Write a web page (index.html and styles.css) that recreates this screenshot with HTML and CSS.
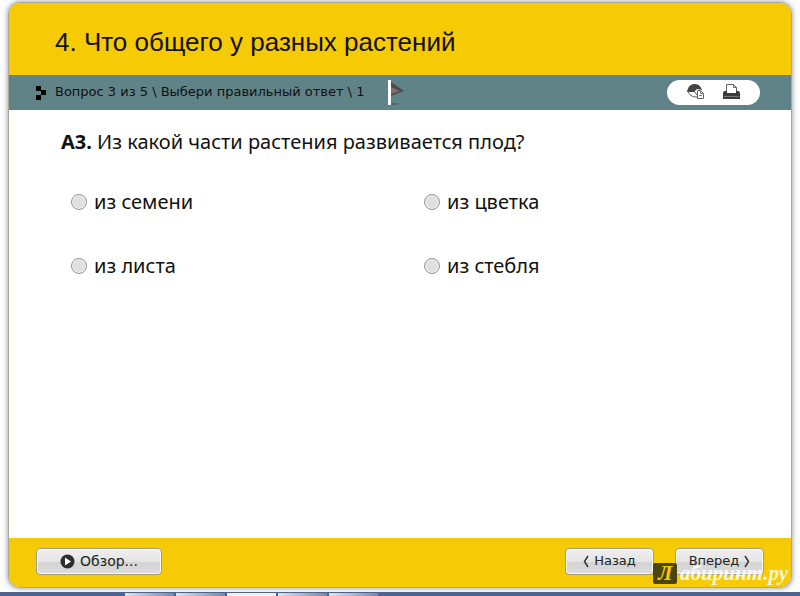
FILE: index.html
```
<!DOCTYPE html>
<html lang="ru">
<head>
  <meta charset="UTF-8">
  <meta name="viewport" content="width=device-width, initial-scale=1.0">
  <title>4. Что общего у разных растений</title>
  <link rel="stylesheet" href="styles.css">
</head>
<body>
  <main class="quiz">
    <header class="quiz-header">
      <h1 class="quiz-title">4. Что общего у разных растений</h1>
    </header>
    <div class="status-bar">
      <svg class="marker" width="10" height="14" viewBox="0 0 10 14" aria-hidden="true">
        <path d="M0 0h5v4h5v5H5v5H0V9h5V5H0z"/>
      </svg>
      <span class="status-text">Вопрос 3 из 5 \ Выбери правильный ответ \ 1</span>
      <svg class="flag" width="18" height="26" viewBox="0 0 18 26" aria-hidden="true">
        <path d="M3 23h8l-2 2H3z" fill="#4a696e"/>
        <path d="M3 2L16 11 3 16z" fill="#4e4a4b"/>
        <path d="M3 7L12 11 3 14z" fill="#777071"/>
        <path d="M0 0h3v25H0z" fill="#fff"/>
      </svg>
      <div class="tools">
        <button type="button" class="tool-btn" aria-label="Оформление">
          <svg width="18" height="18" viewBox="0 0 18 18">
            <path d="M0 9C1 3 4 1 8 1s6 3 7 6l-5-1-3 3z" fill="#444"/>
            <path d="M1 8c1 4 4 6 9 6M7 8l3 4" fill="none" stroke="#555"/>
            <path d="M10.500 7.500h3l3 3v5h-6z" fill="#fff" stroke="#666"/>
            <path d="M13.500 7.500v3h3M12 12.500h3" fill="none" stroke="#777"/>
          </svg>
        </button>
        <button type="button" class="tool-btn" aria-label="Печать">
          <svg width="18" height="18" viewBox="0 0 18 18">
            <path d="M3.500 9V1.500h7l3 3V9" fill="#fff" stroke="#666"/>
            <path d="M10.500 1.500v3h3" fill="none" stroke="#666"/>
            <path d="M1 8h3v2h9V8h3l1 2v6H0v-6z" fill="#3c3c3c"/>
            <path d="M1 13.500h15" stroke="#777"/>
          </svg>
        </button>
      </div>
    </div>

    <form class="question" id="quizForm">
      <p class="question-text" id="questionText"><b>А3.</b> Из какой части растения развивается плод?</p>
      <div class="answers" role="radiogroup" aria-labelledby="questionText">
        <label class="answer"><input type="radio" name="answer" value="1"> из семени</label>
        <label class="answer"><input type="radio" name="answer" value="2"> из цветка</label>
        <label class="answer"><input type="radio" name="answer" value="3"> из листа</label>
        <label class="answer"><input type="radio" name="answer" value="4"> из стебля</label>
      </div>
    </form>

    <footer class="quiz-footer">
      <button type="button" class="btn btn-review">
        <svg class="btn-icon" width="15" height="15" viewBox="0 0 15 15" aria-hidden="true">
          <circle cx="7.500" cy="7.500" r="7" fill="#2e2e2e"/>
          <path d="M5 3.500v8l6-4z" fill="#fff"/>
        </svg>
        Обзор...
      </button>
      <button type="button" class="btn btn-nav">
        <svg class="btn-icon" width="6" height="13" viewBox="0 0 6 13" aria-hidden="true"><path d="M5 1L1.500 6.500 5 12" fill="none" stroke="#333" stroke-width="1.500"/></svg>
        Назад
      </button>
      <button type="button" class="btn btn-nav">
        Вперед
        <svg class="btn-icon" width="6" height="13" viewBox="0 0 6 13" aria-hidden="true"><path d="M1 1l3.500 5.500L1 12" fill="none" stroke="#333" stroke-width="1.500"/></svg>
      </button>
    </footer>
  </main>
  <div class="watermark"><span class="watermark-letter">Л</span>абиринт.ру</div>
  <div class="taskbar">
    <span class="task"></span>
    <span class="task"></span>
    <span class="task task-active"></span>
    <span class="task"></span>
    <span class="task"></span>
  </div>
</body>
</html>
```

FILE: styles.css
```
* { box-sizing: border-box; }
body { margin: 0; min-height: 100vh; display: flex; flex-direction: column; background: #fdfdfe; font-family: "DejaVu Sans", Verdana, sans-serif; color: #111; }

.quiz { flex: 1; display: flex; flex-direction: column; margin: 2px 8px 4px; border: 1px solid #aaa995; border-radius: 12px; overflow: hidden; background: #fff; box-shadow: 0 0 4px 1px #aaadb5; }
.quiz-header { display: flex; align-items: center; height: 72px; padding: 6px 46px 0; background: #f6ca05; }
.quiz-title { margin: 0; font: 26px "Liberation Sans", Arial, sans-serif; color: #111; }

.status-bar { display: flex; align-items: center; height: 35px; padding: 0 31px 0 27px; background: #5f8387; font-size: 13px; }
.marker { margin-right: 9px; }
.status-text { padding-bottom: 2px; line-height: 20px; }
.flag { margin-left: 23px; }
.tools { display: flex; justify-content: center; gap: 18px; width: 93px; height: 25px; margin-left: auto; border-radius: 13px; background: #fff; }
.tool-btn { display: flex; align-items: center; padding: 0 0 2px; border: none; background: none; cursor: pointer; }

.question { flex: 1; padding: 16px 52px; font-family: "Noto Sans", "Open Sans", sans-serif; font-size: 20px; line-height: 32px; }
.question-text { margin: 0 0 28px; }
.answers { display: grid; grid-template-columns: 353px 1fr; row-gap: 32px; padding-left: 10px; }
.answer { display: flex; align-items: center; gap: 7px; }
.answer input { appearance: none; width: 16px; height: 16px; margin: 0; border: 1px solid #929292; border-radius: 50%; background: #e0e0e0; box-shadow: inset 0 0 0 1px #f5f5f5; }
.answer input:checked { background: #333; }

.quiz-footer { display: flex; align-items: center; gap: 21px; height: 49px; padding: 0 27px 2px; background: #f6ca05; }
.btn { display: flex; align-items: center; justify-content: center; gap: 5px; height: 27px; padding: 0 0 2px; border: 1px solid #a39c7c; border-radius: 4px; background: linear-gradient(#f0f0f0, #e4e4e4 50%, #d3d3d3 51%, #dcdcdc); box-shadow: inset 0 0 0 1px #fafafa; font: 14px "DejaVu Sans", Verdana, sans-serif; color: #222; cursor: pointer; }
.btn-icon { margin-top: 2px; }
.btn-review { width: 126px; margin-right: auto; }
.btn-nav { width: 89px; font-size: 13px; }

.watermark { position: absolute; right: 12px; bottom: 12px; display: flex; align-items: center; gap: 3px; font: italic bold 21px/21px "Liberation Serif", "Times New Roman", serif; color: rgba(255, 255, 255, 0.85); pointer-events: none; }
.watermark-letter { width: 24px; text-align: center; border-radius: 2px; background: #4d430c; color: #f6ca05; }

.taskbar { display: flex; gap: 2px; height: 4px; padding-left: 125px; border-top: 1px solid #53627e; background: #4665a5; }
.task { width: 49px; background: linear-gradient(90deg, #dce4f1, #7189b7); }
.task-active { background: #eef0f6; }
```
